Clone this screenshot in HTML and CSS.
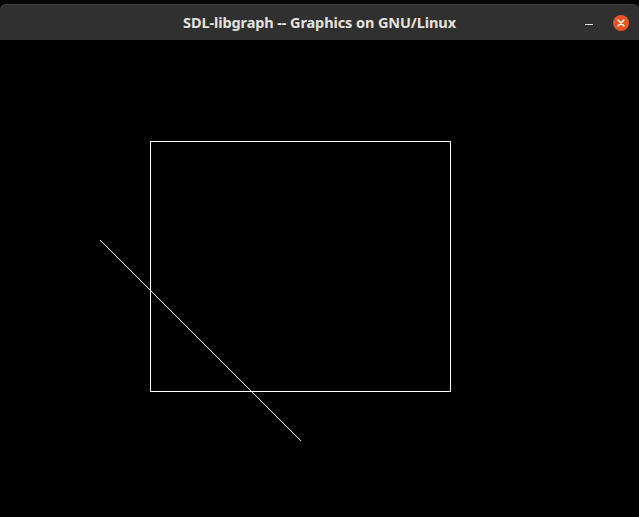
FILE: index.html
```html
<!DOCTYPE html>
<html>
<head>
<meta charset="utf-8">
<link rel="stylesheet" href="styles.css">
</head>
<body>
<div class="window">
  <div class="titlebar">
    <div class="title">SDL-libgraph -- Graphics on GNU/Linux</div>
    <div class="controls">
      <span class="min"></span>
      <span class="close">
        <svg width="16" height="16" viewBox="0 0 16 16"><path d="M5 5 L11 11 M11 5 L5 11" stroke="#fff" stroke-width="1.6" stroke-linecap="round"/></svg>
      </span>
    </div>
  </div>
  <svg class="canvas" width="639" height="477" viewBox="0 0 639 477">
    <rect x="150.5" y="101.5" width="300" height="250" fill="none" stroke="#fff" stroke-width="1" shape-rendering="crispEdges"/>
    <line x1="100.5" y1="200.5" x2="301" y2="401" stroke="#fff" stroke-width="1" shape-rendering="crispEdges"/>
  </svg>
</div>
</body>
</html>
```

FILE: styles.css
```css
html, body {
  margin: 0;
  padding: 0;
  background: #000;
  width: 639px;
  height: 517px;
  overflow: hidden;
}
.window {
  display: flex;
  flex-direction: column;
  padding-top: 4px;
  background: #050505;
}
.titlebar {
  height: 36px;
  background: #303030;
  border-radius: 6px 6px 0 0;
  box-shadow: inset 0 1px 0 #3c3c3c;
  position: relative;
  display: flex;
  align-items: center;
  justify-content: center;
}
.title {
  font-family: "Noto Sans", "Open Sans", sans-serif;
  font-weight: bold;
  font-size: 14.5px;
  color: #e6e3de;
  letter-spacing: -0.1px;
}
.controls {
  position: absolute;
  right: 10px;
  top: 0;
  height: 36px;
  display: flex;
  align-items: center;
  gap: 20px;
}
.min {
  width: 8px;
  height: 1px;
  background: #e6e3de;
  margin-top: 4px;
}
.close {
  width: 16px;
  height: 16px;
  border-radius: 50%;
  background: #e95420;
  display: flex;
  margin-top: 1px;
}
.canvas {
  display: block;
  background: #000;
}
```
